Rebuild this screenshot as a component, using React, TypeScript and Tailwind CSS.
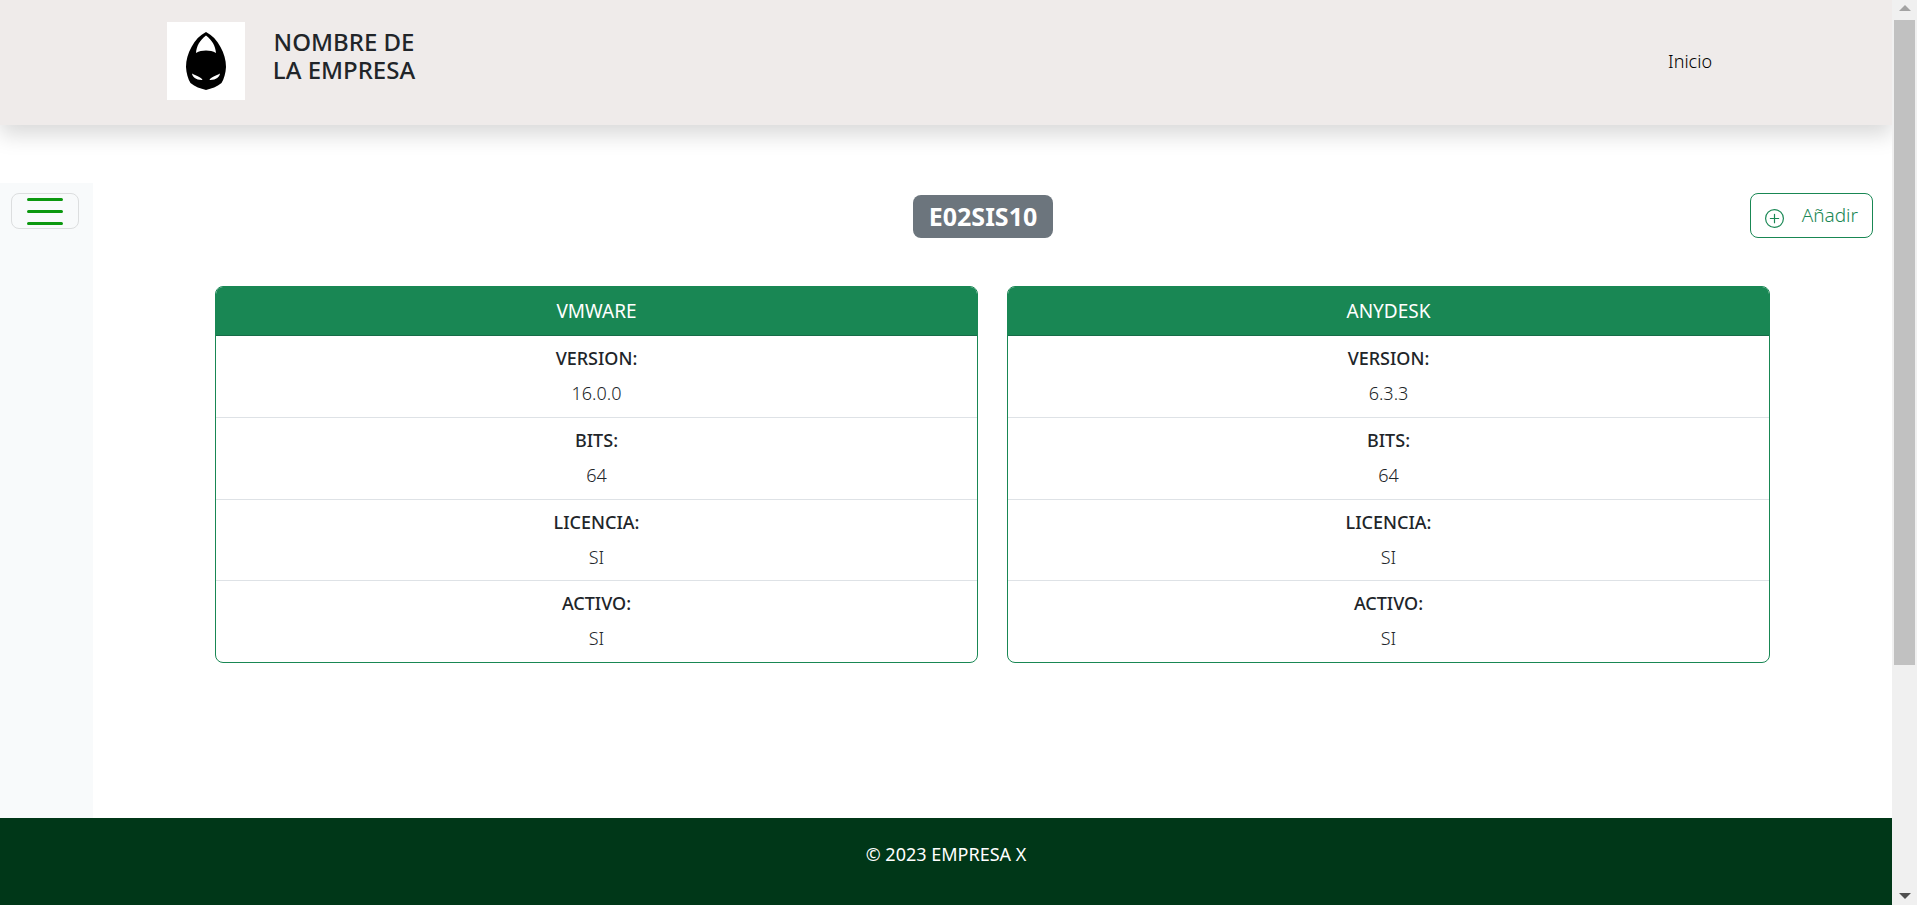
const programs = [
  {
    name: "VMWARE",
    details: [
      ["VERSION:", "16.0.0"],
      ["BITS:", "64"],
      ["LICENCIA:", "SI"],
      ["ACTIVO:", "SI"],
    ],
  },
  {
    name: "ANYDESK",
    details: [
      ["VERSION:", "6.3.3"],
      ["BITS:", "64"],
      ["LICENCIA:", "SI"],
      ["ACTIVO:", "SI"],
    ],
  },
];

function Logo() {
  return (
    <svg viewBox="0 0 78 78" className="size-[78px] shrink-0 bg-white" role="img" aria-label="Logo">
      <path
        fillRule="evenodd"
        d="M39 10C45 13 50 18 53.500 25C57 31 59 38 59 45C58.700 51 57 57 54.500 61C50 65 44.500 66.500 39 68C33.500 66.500 28 65 23.500 61C21 57 19.300 51 19 45C19 38 21 31 24.500 25C28 18 33 13 39 10ZM39 13.500C33 18 29.500 24 29 31C35 27.800 43 27.800 49 31C48.500 24 45 18 39 13.500ZM25 51.500C25.500 55 29 58.300 35.500 58C34.500 55 30 54.500 25 51.500ZM53 51.500C52.500 55 49 58.300 42.500 58C43.500 55 48 54.500 53 51.500Z"
      />
    </svg>
  );
}

function Header() {
  return (
    <header className="relative flex h-[125px] items-start justify-between bg-[#efebea] pr-[180px] pl-[167px] pt-[22px] shadow-[0_10px_20px_rgba(0,0,0,0.15)]">
      <div className="flex gap-5">
        <Logo />
        <h1 className="w-[158px] pt-1.5 text-center text-2xl leading-7 font-medium">NOMBRE DE LA EMPRESA</h1>
      </div>
      <nav className="flex h-[78px] items-center">
        <a href="#" className="text-lg font-[350] text-black">
          Inicio
        </a>
      </nav>
    </header>
  );
}

function ProgramCard({ name, details }: { name: string; details: string[][] }) {
  return (
    <article className="overflow-hidden rounded-lg border border-[#198754] text-center">
      <h3 className="border-b border-[#176b48] bg-[#198754] py-3 text-[19px] leading-6 text-white">{name}</h3>
      <dl className="flex h-[326px] flex-col divide-y divide-[#dee2e6]">
        {details.map(([label, value]) => (
          <div key={label} className="flex flex-1 flex-col gap-[11px] pt-2.5 text-lg leading-6">
            <dt className="font-medium">{label}</dt>
            <dd className="font-[350]">{value}</dd>
          </div>
        ))}
      </dl>
    </article>
  );
}

function ScrollTrack() {
  return (
    <div className="flex w-[25px] shrink-0 flex-col items-center bg-[#f0f0f0]" aria-hidden="true">
      <div className="flex h-5 shrink-0 items-center pb-1">
        <svg viewBox="0 0 12 6" className="h-1.5 w-3 fill-[#a3a3a3]">
          <path d="M6 0L12 6H0Z" />
        </svg>
      </div>
      <div className="w-[21px] flex-[646] bg-[#c1c1c1]" />
      <div className="flex-[229]" />
      <svg viewBox="0 0 12 6" className="mb-1.5 h-1.5 w-3 shrink-0 fill-[#505050]">
        <path d="M0 0H12L6 6Z" />
      </svg>
    </div>
  );
}

export default function App() {
  return (
    <div className="flex min-h-screen bg-white font-['Noto_Sans',sans-serif] text-[#212529]">
      <div className="flex min-w-0 flex-1 flex-col overflow-hidden">
        <Header />
        <div className="flex flex-1 pt-[58px]">
          <aside className="w-[93px] shrink-0 bg-[#f8fafb] pt-2.5 pl-[11px]">
            <button
              type="button"
              aria-label="Menú"
              className="flex h-9 w-[68px] items-center justify-center rounded-lg border border-[#dcdedf]"
            >
              <svg viewBox="0 0 36 28" className="h-7 w-9" stroke="#0b980f" strokeWidth="3" strokeLinecap="round">
                <path d="M1.500 2.500H34.500M1.500 14.500H34.500M1.500 26.500H34.500" />
              </svg>
            </button>
          </aside>
          <main className="min-w-0 flex-1">
            <div className="grid grid-cols-[1fr_auto_1fr] items-center pt-2.5 pr-[19px]">
              <h2 className="col-start-2 mt-0.5 flex h-[43px] items-center rounded-lg bg-[#6c757d] px-4 text-[25px] font-bold text-white">
                E02SIS10
              </h2>
              <button
                type="button"
                className="flex h-[45px] items-center gap-[18px] justify-self-end rounded-lg border border-[#198754] px-3.5 text-[19px] font-[350] text-[#198754]"
              >
                <svg viewBox="0 0 16 16" className="mt-1.5 size-[19px]" fill="currentColor">
                  <path d="M8 15A7 7 0 1 1 8 1a7 7 0 0 1 0 14m0 1A8 8 0 1 0 8 0a8 8 0 0 0 0 16" />
                  <path d="M8 4a.5.5 0 0 1 .5.5v3h3a.5.5 0 0 1 0 1h-3v3a.5.5 0 0 1-1 0v-3h-3a.5.5 0 0 1 0-1h3v-3A.5.5 0 0 1 8 4" />
                </svg>
                Añadir
              </button>
            </div>
            <div className="grid grid-cols-2 gap-[29px] px-[122px] pt-12">
              {programs.map((program) => (
                <ProgramCard key={program.name} {...program} />
              ))}
            </div>
          </main>
        </div>
        <footer className="h-[87px] bg-[#003718] pt-6 text-center text-lg leading-6 text-white">
          © 2023 EMPRESA X
        </footer>
      </div>
      <ScrollTrack />
    </div>
  );
}
